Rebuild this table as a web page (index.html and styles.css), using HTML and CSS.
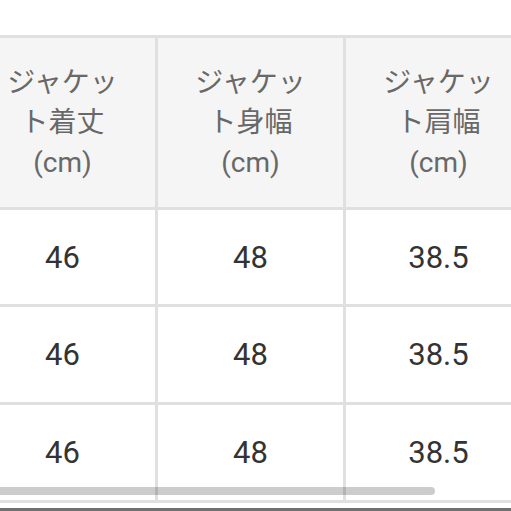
FILE: index.html
```html
<!DOCTYPE html>
<html lang="ja">
<head>
<meta charset="utf-8">
<link rel="stylesheet" href="styles.css">
</head>
<body>
<div class="frame">
  <div class="scroller">
    <div class="grid">
      <div class="cell head">ジャケット着丈 (cm)</div>
      <div class="cell head">ジャケット身幅 (cm)</div>
      <div class="cell head">ジャケット肩幅 (cm)</div>
      <div class="cell num">46</div>
      <div class="cell num">48</div>
      <div class="cell num">38.5</div>
      <div class="cell num">46</div>
      <div class="cell num">48</div>
      <div class="cell num">38.5</div>
      <div class="cell num">46</div>
      <div class="cell num">48</div>
      <div class="cell num">38.5</div>
    </div>
  </div>
  <div class="scrollbar"></div>
  <div class="bottom-line"></div>
</div>
</body>
</html>
```
FILE: styles.css
```css
html, body {
  margin: 0;
  padding: 0;
  background: #ffffff;
}
.frame {
  position: relative;
  width: 511px;
  height: 511px;
  overflow: hidden;
  padding-top: 35px;
  box-sizing: border-box;
}
.scroller {
  overflow: hidden;
  width: 511px;
}
.grid {
  display: grid;
  grid-template-columns: 185px 185px 185px;
  grid-template-rows: 169px 94px 95px 95px;
  gap: 3px;
  padding: 3px;
  background: #e0e0e0;
  width: max-content;
  margin-left: -33px;
}
.cell {
  display: flex;
  align-items: center;
  justify-content: center;
  text-align: center;
  background: #ffffff;
  font-family: "Roboto", "Noto Sans CJK JP", sans-serif;
}
.head {
  background: #f5f5f5;
  color: #686868;
  font-size: 28px;
  line-height: 40px;
  padding: 0 34px;
  font-family: "Roboto", "Noto Sans CJK JP", sans-serif;
}
.num {
  color: #333333;
  font-size: 31px;
}
.scrollbar {
  position: absolute;
  left: -4px;
  top: 487px;
  width: 439px;
  height: 8px;
  border-radius: 4px;
  background: rgba(0, 0, 0, 0.2);
}
.bottom-line {
  margin-top: 5px;
  height: 3px;
  background: #707070;
}
```
